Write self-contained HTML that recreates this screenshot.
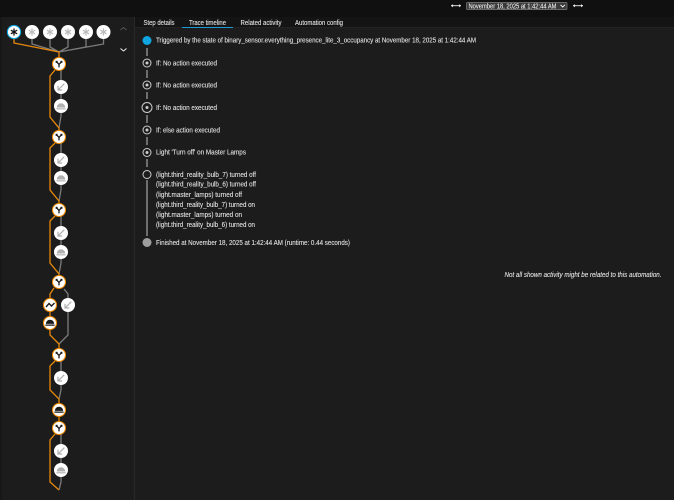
<!DOCTYPE html>
<html><head><meta charset="utf-8">
<style>
html,body{margin:0;padding:0;background:#1c1c1c;width:674px;height:500px;overflow:hidden}
svg{display:block;position:absolute;left:0;top:0}
text{font-family:"Liberation Sans",sans-serif;font-size:7px;fill:#e2e2e2;stroke:#e2e2e2;stroke-width:.1}
.n{fill:#fff}
.go{fill:none;stroke:#e8890a;stroke-width:1.3}
.gr{fill:none;stroke:#7c7c7c;stroke-width:1.3}
</style></head><body>
<svg width="674" height="500" viewBox="0 0 674 500" xmlns="http://www.w3.org/2000/svg">
<defs>
<g id="aster"><path d="M0-3.600V3.600M-3.100-1.800 3.100 1.800M-3.100 1.800 3.100-1.800" stroke-width="1.200" fill="none"/><circle r="1.500" stroke="none"/></g>
<g id="fork"><path d="M0 3.400V.4L-2.200-1.900M0 .4 2.200-1.900" stroke-width="1.300" fill="none" stroke="#1a1a1a"/><rect x="-3.400" y="-3.200" width="2" height="2" fill="#1a1a1a"/><rect x="1.400" y="-3.200" width="2" height="2" fill="#1a1a1a"/></g>
<g id="arr"><path d="M3.300-3.300-2.400 2.400M-3 -1.200V3H1.200" stroke="#b0b0b0" stroke-width="1.200" fill="none"/></g>
<g id="bell"><path d="M-4.200 1.500A4.200 4.200 0 0 1 4.200 1.500ZM-4.600 2.200H4.600V3.400H-4.600Z" fill="#b0b0b0"/></g>
<g id="bellb"><path d="M-4.200 .9A4.200 4.200 0 0 1 4.200 .9ZM-4.600 1.500H4.600V2.700H-4.600Z" fill="#1a1a1a"/></g>
<g id="dbl"><path d="M0 0H10" stroke="#f0f0f0" stroke-width=".9"/><path d="M0 0 2-1.600V1.600ZM10 0 8-1.600V1.600Z" fill="#f0f0f0"/></g>
</defs>

<rect width="674" height="17" fill="#101010"/>
<rect y="17" width="674" height="10" fill="#141414"/>
<rect y="27" width="674" height="473" fill="#1c1c1c"/>
<rect y="17" width="135" height="483" fill="#1c1c1c"/>
<rect x="0" y="17" width="2" height="483" fill="#171717"/>
<rect x="134" y="17" width="1" height="483" fill="#292929"/>
<rect x="135" y="27" width="539" height=".6" fill="#262626"/>

<use href="#dbl" x="451" y="5.700"/>
<use href="#dbl" x="573" y="5.700"/>
<rect x="466.500" y="2.500" width="100.500" height="7" rx="1" fill="#3a3a3a" stroke="#808080" stroke-width=".7"/>
<text x="468.500" y="8.400" textLength="88" lengthAdjust="spacingAndGlyphs" style="fill:#eee">November 18, 2025 at 1:42:44 AM</text>
<path d="M560.500 4.800 562.700 7 565 4.800" fill="none" stroke="#eee" stroke-width="1"/>

<text x="143.500" y="25" textLength="31" lengthAdjust="spacingAndGlyphs">Step details</text>
<text x="189" y="25" textLength="37" lengthAdjust="spacingAndGlyphs">Trace timeline</text>
<text x="240.500" y="25" textLength="41" lengthAdjust="spacingAndGlyphs">Related activity</text>
<text x="295" y="25" textLength="48" lengthAdjust="spacingAndGlyphs">Automation config</text>
<rect x="182" y="27" width="51" height="1" fill="#1c9ad6"/>

<path class="gr" d="M32 39V44L59 52M50 39V47L59 52M68 39V47L59 52M86 39V47L59 52M103.500 39V44L59 52"/>
<path class="gr" d="M61 70V100M61 112V116L59 128"/>
<path class="gr" d="M61 143V172M61 184V190L59 201"/>
<path class="gr" d="M61 216V245M61 257V263L59 274"/>
<path class="gr" d="M64 289 68 294V335L59 344" stroke-width="1.500"/>
<path class="gr" d="M61 361V372M61 384V390L59 399"/>
<path class="gr" d="M61 434V464M61 476V482L59 490"/>
<path class="go" d="M14 39V43L59 52V58"/>
<path class="go" d="M55 70 50 76V117L59 128V131"/>
<path class="go" d="M55 143 50 148V190L59 201V204"/>
<path class="go" d="M55 216 50 221V263L59 274V276"/>
<path class="go" d="M54 288 50 294V335L59 344V349"/>
<path class="go" d="M55 361 50 366V390L59 399V404M59 416V422"/>
<path class="go" d="M55 434 50 440V482L59 490"/>

<circle cx="14" cy="32" r="6.600" class="n" stroke="#0ea5e0" stroke-width="1.100"/>
<use href="#aster" x="14" y="32" stroke="#111" fill="#111"/>
<g stroke="#bdbdbd" fill="#bdbdbd">
<circle cx="32" cy="32" r="7" class="n" stroke="none"/><use href="#aster" x="32" y="32"/>
<circle cx="50" cy="32" r="7" class="n" stroke="none"/><use href="#aster" x="50" y="32"/>
<circle cx="68" cy="32" r="7" class="n" stroke="none"/><use href="#aster" x="68" y="32"/>
<circle cx="86" cy="32" r="7" class="n" stroke="none"/><use href="#aster" x="86" y="32"/>
<circle cx="103.500" cy="32" r="7" class="n" stroke="none"/><use href="#aster" x="103.500" y="32"/>
</g>
<path d="M120.500 30 123.500 27.500 126.500 30" fill="none" stroke="#555" stroke-width="1"/>
<path d="M120.500 48.500 123.500 51 126.500 48.500" fill="none" stroke="#eee" stroke-width="1"/>

<g fill="#fff" stroke="#ef8a00" stroke-width="1.100">
<circle cx="59" cy="64" r="6.500"/><circle cx="59" cy="137" r="6.500"/><circle cx="59" cy="210" r="6.500"/><circle cx="59" cy="282" r="6.500"/><circle cx="59" cy="355" r="6.500"/><circle cx="59" cy="428" r="6.500"/>
<circle cx="50" cy="305" r="6.500"/><circle cx="50" cy="323" r="6.500"/><circle cx="59" cy="410" r="6.500"/>
</g>
<use href="#fork" x="59" y="64"/><use href="#fork" x="59" y="137"/><use href="#fork" x="59" y="210"/><use href="#fork" x="59" y="282"/><use href="#fork" x="59" y="355"/><use href="#fork" x="59" y="428"/>
<path d="M46 307 49 303.500 51.500 306 54.500 303" fill="none" stroke="#1a1a1a" stroke-width="1.400"/>
<use href="#bellb" x="50" y="323"/><use href="#bellb" x="59" y="410"/>

<g class="n">
<circle cx="61" cy="87" r="7"/><circle cx="61" cy="106" r="7"/><circle cx="61" cy="160" r="7"/><circle cx="61" cy="178" r="7"/>
<circle cx="61" cy="233" r="7"/><circle cx="61" cy="252" r="7"/><circle cx="68" cy="305" r="7"/><circle cx="61" cy="378" r="7"/>
<circle cx="61" cy="451" r="7"/><circle cx="61" cy="470" r="7"/>
</g>
<use href="#arr" x="61" y="87"/><use href="#arr" x="61" y="160"/><use href="#arr" x="61" y="233"/><use href="#arr" x="68" y="305"/><use href="#arr" x="61" y="378"/><use href="#arr" x="61" y="451"/>
<use href="#bell" x="61" y="106"/><use href="#bell" x="61" y="178"/><use href="#bell" x="61" y="252"/><use href="#bell" x="61" y="470"/>

<path d="M147 48V56M147 70V78M147 92V99M147 115V123M147 137V145M147 159V167M147 180V236" stroke="#c0c0c0" stroke-width="1" fill="none"/>
<circle cx="147" cy="40.500" r="4.500" fill="#0ea5e0"/>
<circle cx="147" cy="63" r="4" fill="none" stroke="#ccc" stroke-width="1"/><circle cx="147" cy="63" r="1.500" fill="#ccc"/>
<circle cx="147" cy="85" r="4" fill="none" stroke="#ccc" stroke-width="1"/><circle cx="147" cy="85" r="1.500" fill="#ccc"/>
<circle cx="147" cy="107.500" r="5" fill="none" stroke="#ccc" stroke-width="1"/><circle cx="147" cy="107.500" r="1.500" fill="#ccc"/>
<circle cx="147" cy="130" r="4" fill="none" stroke="#ccc" stroke-width="1"/><circle cx="147" cy="130" r="1.500" fill="#ccc"/>
<circle cx="147" cy="152.500" r="4" fill="none" stroke="#ccc" stroke-width="1"/><circle cx="147" cy="152.500" r="1.500" fill="#ccc"/>
<circle cx="147" cy="174.500" r="4" fill="none" stroke="#ccc" stroke-width="1"/>
<circle cx="147" cy="242.500" r="4.500" fill="#9e9e9e"/>

<text x="156" y="42.700" textLength="320" lengthAdjust="spacingAndGlyphs">Triggered by the state of binary_sensor.everything_presence_lite_3_occupancy at November 18, 2025 at 1:42:44 AM</text>
<text x="156" y="65.400" textLength="61" lengthAdjust="spacingAndGlyphs">If: No action executed</text>
<text x="156" y="87.700" textLength="61" lengthAdjust="spacingAndGlyphs">If: No action executed</text>
<text x="156" y="109.900" textLength="61" lengthAdjust="spacingAndGlyphs">If: No action executed</text>
<text x="156" y="132.400" textLength="64" lengthAdjust="spacingAndGlyphs">If: else action executed</text>
<text x="156" y="154.700" textLength="90" lengthAdjust="spacingAndGlyphs">Light 'Turn off' on Master Lamps</text>
<text x="156" y="177.200" textLength="100" lengthAdjust="spacingAndGlyphs">(light.third_reality_bulb_7) turned off</text>
<text x="156" y="186.700" textLength="100" lengthAdjust="spacingAndGlyphs">(light.third_reality_bulb_6) turned off</text>
<text x="156" y="197.200" textLength="86" lengthAdjust="spacingAndGlyphs">(light.master_lamps) turned off</text>
<text x="156" y="207.200" textLength="99" lengthAdjust="spacingAndGlyphs">(light.third_reality_bulb_7) turned on</text>
<text x="156" y="217.200" textLength="86" lengthAdjust="spacingAndGlyphs">(light.master_lamps) turned on</text>
<text x="156" y="227.200" textLength="99" lengthAdjust="spacingAndGlyphs">(light.third_reality_bulb_6) turned on</text>
<text x="156" y="244.900" textLength="194" lengthAdjust="spacingAndGlyphs">Finished at November 18, 2025 at 1:42:44 AM (runtime: 0.44 seconds)</text>
<text x="504.500" y="277" textLength="157" lengthAdjust="spacingAndGlyphs" style="font-style:italic">Not all shown activity might be related to this automation.</text>
</svg>
</body></html>
